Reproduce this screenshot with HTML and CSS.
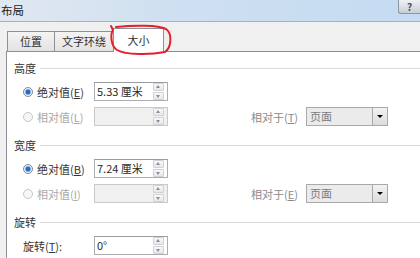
FILE: index.html
```html
<!DOCTYPE html>
<html lang="zh-CN">
<head>
    <meta charset="UTF-8">
    <title>布局</title>
    <link rel="stylesheet" href="styles.css">
</head>
<body>
    <div class="window">
        <div class="titlebar">
            <span class="title">布局</span>
            <span class="help">?</span>
        </div>
        <div class="tabs">
            <div class="tab">位置</div>
            <div class="tab">文字环绕</div>
            <div class="tab active">大小</div>
        </div>
        <div class="panel">
            <div class="group">
                <div class="group-head">高度</div>
                <div class="row">
                    <label class="opt"><span class="radio checked"></span>绝对值(<u>E</u>)</label>
                    <div class="spin"><span class="val">5.33 厘米</span><span class="arrows"><i class="up"></i><i class="down"></i></span></div>
                </div>
                <div class="row">
                    <label class="opt disabled"><span class="radio"></span>相对值(<u>L</u>)</label>
                    <div class="spin off"><span class="val"></span><span class="arrows"><i class="up"></i><i class="down"></i></span></div>
                    <span class="rel">相对于(<u>T</u>)</span>
                    <div class="select"><span class="val">页面</span><span class="drop"></span></div>
                </div>
            </div>
            <div class="group">
                <div class="group-head">宽度</div>
                <div class="row">
                    <label class="opt"><span class="radio checked"></span>绝对值(<u>B</u>)</label>
                    <div class="spin"><span class="val">7.24 厘米</span><span class="arrows"><i class="up"></i><i class="down"></i></span></div>
                </div>
                <div class="row">
                    <label class="opt disabled"><span class="radio"></span>相对值(<u>I</u>)</label>
                    <div class="spin off"><span class="val"></span><span class="arrows"><i class="up"></i><i class="down"></i></span></div>
                    <span class="rel">相对于(<u>E</u>)</span>
                    <div class="select"><span class="val">页面</span><span class="drop"></span></div>
                </div>
            </div>
            <div class="group">
                <div class="group-head">旋转</div>
                <div class="row">
                    <label class="opt">旋转(<u>T</u>):</label>
                    <div class="spin"><span class="val">0°</span><span class="arrows"><i class="up"></i><i class="down"></i></span></div>
                </div>
            </div>
        </div>
    </div>
    <svg class="mark" width="420" height="60" viewBox="0 0 420 60">
        <path d="M116 27 C 135 25, 158 25, 166 29 C 172 33, 172 47, 165 52 C 150 55, 126 55, 117 50 C 111 46, 110 35, 113 30 L 111 26" fill="none" stroke="#e0202a" stroke-width="2" stroke-linecap="round"/>
    </svg>
</body>
</html>
```

FILE: styles.css
```css
body {
    margin: 0;
    width: 420px;
    height: 258px;
    overflow: hidden;
    font-family: "Noto Sans CJK SC", sans-serif;
    font-size: 11px;
    color: #333;
    white-space: nowrap;
}

.window {
    background-color: #f0f0f0;
    height: 258px;
}

.titlebar {
    height: 21px;
    display: flex;
    justify-content: space-between;
    align-items: flex-start;
    background: linear-gradient(to right, #e1e8f0, #cfe0f1 40%, #c4dbf1);
    border-bottom: 1px solid #a3b3c4;
}

.title {
    padding: 3px 0 0 1px;
    line-height: 15px;
    font-size: 11.5px;
    color: #202020;
}

.help {
    width: 21px;
    height: 13px;
    line-height: 13px;
    text-align: center;
    font-size: 10px;
    font-weight: bold;
    color: #4a5060;
    background: linear-gradient(#eef1f5, #c9ced6);
    border: 1px solid #8d96a4;
    border-top: none;
    border-right: none;
    border-radius: 0 0 0 3px;
}

.tabs {
    display: flex;
    align-items: flex-end;
    height: 29px;
    padding-left: 7px;
}

.tab {
    box-sizing: border-box;
    height: 20px;
    line-height: 19px;
    text-align: center;
    border: 1px solid #8e9096;
    border-bottom: none;
    border-right: none;
    background: linear-gradient(#f4f4f4, #e2e2e2);
    color: #303030;
}

.tab:first-child {
    width: 47px;
}

.tab:nth-child(2) {
    width: 59px;
}

.tab.active {
    width: 51px;
    height: 24px;
    line-height: 22px;
    margin-bottom: -1px;
    background: #fff;
    border-right: 1px solid #8e9096;
    position: relative;
    z-index: 1;
}

.panel {
    margin-left: 6px;
    height: 206px;
    background: #fff;
    border-top: 1px solid #8e9096;
    border-left: 1px solid #8e9096;
    padding-top: 8px;
}

.group {
    margin-bottom: 8px;
}

.group-head {
    display: flex;
    align-items: center;
    height: 16px;
    line-height: 16px;
    padding-left: 7px;
    margin-bottom: 3px;
    color: #333;
}

.group-head::after {
    content: "";
    flex: 1;
    height: 1px;
    margin-left: 4px;
    background: #dcdcdc;
}

.row {
    display: flex;
    align-items: center;
    height: 25px;
    padding-left: 16px;
}

.opt {
    display: flex;
    align-items: center;
    flex-shrink: 0;
    width: 71px;
    color: #333;
}

.opt.disabled {
    color: #a8a8a8;
}

u {
    text-decoration-thickness: 1px;
    text-underline-offset: 1px;
}

.radio {
    flex-shrink: 0;
    width: 8px;
    height: 8px;
    margin-right: 4px;
    border: 1px solid #c8c8c8;
    border-radius: 50%;
    background: #f6f6f6;
}

.radio.checked {
    border-color: #7d8b9b;
    background: radial-gradient(circle, #2b66c9 0 2px, #7aa7e6 2.5px, #e8eef6 3.5px);
}

.spin {
    display: flex;
    justify-content: space-between;
    align-items: center;
    flex-shrink: 0;
    width: 74px;
    height: 19px;
    box-sizing: border-box;
    border: 1px solid #abadb3;
    border-top-color: #9a9ca3;
    background: #fff;
}

.spin.off {
    background: #f0f0f0;
    border-color: #c9c9c9;
}

.spin .val {
    padding-left: 2px;
    line-height: 17px;
    color: #2a2a2a;
}

.arrows {
    display: flex;
    flex-direction: column;
    gap: 1px;
    margin-right: 3px;
}

.arrows i {
    display: block;
    position: relative;
    width: 9px;
    height: 6px;
    border: 1px solid #cfd3d8;
    border-radius: 1px;
    background: linear-gradient(#f8f8f8, #e6e8ea);
}

.arrows i::after {
    content: "";
    position: absolute;
    left: 2px;
    top: 1px;
    border-left: 2.5px solid transparent;
    border-right: 2.5px solid transparent;
}

.arrows .up::after {
    border-bottom: 3px solid #8a9099;
}

.arrows .down::after {
    top: 2px;
    border-top: 3px solid #8a9099;
}

.rel {
    flex-shrink: 0;
    width: 130px;
    text-align: right;
    color: #8a8a8a;
}

.select {
    display: flex;
    align-items: stretch;
    flex-shrink: 0;
    margin-left: 8px;
    width: 82px;
    height: 19px;
    box-sizing: border-box;
    border: 1px solid #a9a9a9;
    background: #ebebeb;
}

.select .val {
    flex: 1;
    padding-left: 3px;
    line-height: 17px;
    color: #7a7a7a;
}

.drop {
    width: 14px;
    border-left: 1px solid #a9a9a9;
    background: linear-gradient(#f2f2f2, #dcdcdc);
    position: relative;
}

.drop::after {
    content: "";
    position: absolute;
    left: 4px;
    top: 7px;
    border-left: 3px solid transparent;
    border-right: 3px solid transparent;
    border-top: 3px solid #000;
}

.mark {
    position: absolute;
    left: 0;
    top: 0;
    pointer-events: none;
    z-index: 2;
}
```
